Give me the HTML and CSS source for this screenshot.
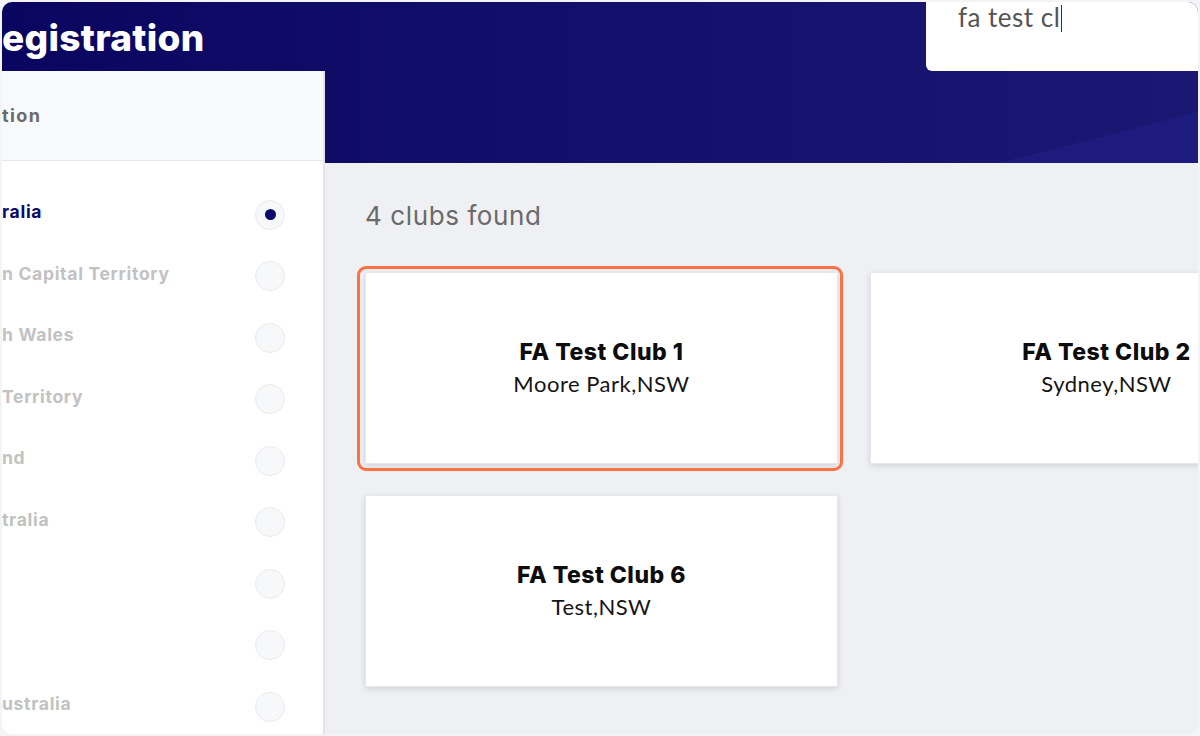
FILE: index.html
```html
<!DOCTYPE html>
<html lang="en">
<head>
<meta charset="utf-8">
<title>Registration</title>
<link rel="stylesheet" href="styles.css">
</head>
<body>
<div class="frame">
  <header class="topbar">
    <h1 class="title">egistration</h1>
    <div class="search"><span class="search-text">fa test cl</span><span class="caret"></span></div>
  </header>
  <div class="body">
    <aside class="sidebar">
      <div class="side-head">tion</div>
      <ul class="states">
        <li class="state selected"><span class="state-name">ralia</span><span class="radio"></span></li>
        <li class="state"><span class="state-name">n Capital Territory</span><span class="radio"></span></li>
        <li class="state"><span class="state-name">h Wales</span><span class="radio"></span></li>
        <li class="state"><span class="state-name">Territory</span><span class="radio"></span></li>
        <li class="state"><span class="state-name">nd</span><span class="radio"></span></li>
        <li class="state"><span class="state-name">tralia</span><span class="radio"></span></li>
        <li class="state"><span class="state-name"></span><span class="radio"></span></li>
        <li class="state"><span class="state-name"></span><span class="radio"></span></li>
        <li class="state"><span class="state-name">ustralia</span><span class="radio"></span></li>
      </ul>
    </aside>
    <main class="main">
      <h2 class="count">4 clubs found</h2>
      <div class="grid">
        <div class="card highlight">
          <div class="card-title">FA Test Club 1</div>
          <div class="card-sub">Moore Park,NSW</div>
        </div>
        <div class="card">
          <div class="card-title">FA Test Club 2</div>
          <div class="card-sub">Sydney,NSW</div>
        </div>
        <div class="card">
          <div class="card-title">FA Test Club 6</div>
          <div class="card-sub">Test,NSW</div>
        </div>
      </div>
    </main>
  </div>
</div>
</body>
</html>
```
FILE: styles.css
```css
html, body {
  margin: 0;
  padding: 0;
  background: #f3f4f6;
}

.frame {
  box-sizing: border-box;
  width: 1196px;
  height: 732px;
  margin: 2px;
  border-radius: 10px;
  overflow: hidden;
  display: flex;
  flex-direction: column;
  background:
    linear-gradient(to bottom right, rgba(29, 28, 126, 0) 50%, #1d1c7e 50.5%) right 110px / 200px 51px no-repeat,
    linear-gradient(90deg, #0a0660 0%, #120f6a 45%, #1a1873 100%) left top / 100% 161px no-repeat,
    #eff0f3;
}

.topbar {
  height: 69px;
  flex-shrink: 0;
  display: flex;
  justify-content: space-between;
}

.title {
  margin: 1px 0 0 0;
  font-family: Inter, "Noto Sans", sans-serif;
  font-weight: 800;
  font-size: 37px;
  line-height: 69px;
  color: #ffffff;
  letter-spacing: 0.3px;
}

.search {
  box-sizing: border-box;
  width: 272px;
  background: #ffffff;
  border-bottom-left-radius: 6px;
  padding-left: 32px;
  display: flex;
  align-items: flex-start;
}

.search-text {
  font-family: Lato, "Open Sans", sans-serif;
  font-size: 26px;
  line-height: 31px;
  letter-spacing: 0.5px;
  color: #555555;
}

.caret {
  display: inline-block;
  width: 1px;
  height: 27px;
  margin-top: 3px;
  margin-left: 1px;
  background: #333333;
}

.body {
  flex: 1;
  display: flex;
  min-height: 0;
}

.sidebar {
  width: 321px;
  flex-shrink: 0;
  background: #ffffff;
  border-right: 2px solid #e3e4e7;
}

.side-head {
  height: 89px;
  background: #f8f9fb;
  border-bottom: 1px solid #e6e7ea;
  display: flex;
  align-items: center;
  font-family: Inter, "Noto Sans", sans-serif;
  font-weight: 700;
  font-size: 18px;
  letter-spacing: 1.4px;
  color: #6b6b6b;
}

.states {
  list-style: none;
  margin: 0;
  padding: 23px 38px 0 0;
}

.state {
  height: 61.5px;
  display: flex;
  align-items: center;
  justify-content: space-between;
}

.state-name {
  font-family: Inter, "Noto Sans", sans-serif;
  font-weight: 700;
  font-size: 17.5px;
  letter-spacing: 0.7px;
  color: #c2c2c2;
  margin-top: -6px;
  white-space: nowrap;
}

.selected .state-name {
  color: #0b0b6b;
}

.radio {
  box-sizing: border-box;
  width: 30px;
  height: 30px;
  border-radius: 50%;
  border: 1.5px solid #e9eaed;
  background: #f7f8fa;
  display: flex;
  align-items: center;
  justify-content: center;
}

.selected .radio::after {
  content: "";
  width: 11px;
  height: 11px;
  border-radius: 50%;
  background: #0a0a6e;
}

.main {
  flex: 1;
  min-width: 0;
  padding: 129px 0 0 40px;
}

.count {
  margin: 0;
  font-family: Inter, "Noto Sans", sans-serif;
  font-weight: 400;
  font-size: 26px;
  line-height: 32px;
  letter-spacing: 0.6px;
  color: #6a6a6a;
}

.grid {
  display: grid;
  grid-template-columns: 473px 473px;
  column-gap: 32px;
  row-gap: 31px;
  margin-top: 40px;
}

.card {
  position: relative;
  box-sizing: border-box;
  height: 192px;
  background: #ffffff;
  border: 1px solid #e6e7ea;
  box-shadow: 0 2px 6px rgba(0, 0, 0, 0.12);
  display: flex;
  flex-direction: column;
  align-items: center;
  justify-content: center;
}

.card.highlight::before {
  content: "";
  position: absolute;
  top: -7px;
  right: -6px;
  bottom: -8px;
  left: -9px;
  border: 3px solid #ff7043;
  border-radius: 9px;
}

.card-title {
  font-family: Inter, "Noto Sans", sans-serif;
  font-weight: 800;
  font-size: 23px;
  line-height: 30px;
  letter-spacing: 0.5px;
  color: #0d0d0d;
}

.card-sub {
  margin-top: 2px;
  font-family: Lato, "Open Sans", sans-serif;
  font-size: 22px;
  line-height: 30px;
  letter-spacing: 0.5px;
  color: #151515;
}
```
